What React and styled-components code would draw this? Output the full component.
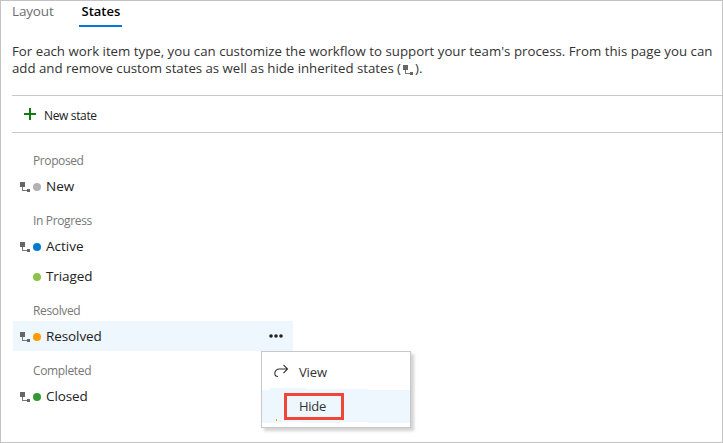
import React from "react";
import styled, { createGlobalStyle } from "styled-components";

const Global = createGlobalStyle`
  * { box-sizing: border-box; }
  body { margin: 0; background: #fff; font-family: "Open Sans", "Noto Sans", sans-serif; }
`;

const Page = styled.main`
  position: relative;
  width: 723px;
  height: 443px;
  padding-left: 11px;
  overflow: hidden;
  border: 1px solid #c3c3c3;
  background: #fff;
  color: #222;
`;

const Label = styled.span`
  white-space: pre;
  font-size: ${(p) => p.$size || 13}px;
  letter-spacing: ${(p) => p.$ls || 0}px;
`;

const Tabs = styled.nav`
  display: flex;
  height: 27px;
  gap: 25px;
`;

const Tab = styled.div`
  height: 26px;
  width: ${(p) => p.$width}px;
  padding-left: ${(p) => (p.$active ? 2.5 : 0)}px;
  line-height: 19px;
  color: ${(p) => (p.$active ? "#000" : "#6e6e6e")};
  font-weight: ${(p) => (p.$active ? 600 : 400)};
  border-bottom: ${(p) => (p.$active ? "2px solid #0078d7" : "0")};
`;

const Description = styled.div`
  height: 67px;
  padding-top: 15px;
  color: #333;
`;

const Line = styled.div`
  display: flex;
  align-items: center;
  height: 17px;
  line-height: 17px;
`;

const Toolbar = styled.div`
  display: flex;
  align-items: center;
  height: 38px;
  padding-left: 12px;
  gap: 8px;
  border-top: 1px solid #c8c8c8;
  border-bottom: 1px solid #c8c8c8;
  line-height: 20px;
`;

const ToolbarText = styled.span`
  padding-top: 1px;
  line-height: 20px;
`;

const List = styled.section`
  width: 281px;
  padding: 8px 0 0 1px;
`;

const Heading = styled.div`
  height: 30px;
  padding-left: 20px;
  line-height: 37px;
  color: #777;
`;

const StateRow = styled.div`
  display: flex;
  align-items: center;
  height: 30px;
  padding: 0 10px 0 7px;
  line-height: 30px;
  background: ${(p) => (p.$selected ? "#eef6fe" : "transparent")};
`;

const IconSlot = styled.span`
  display: flex;
  width: 13px;
  padding-top: 1px;
`;

const Dot = styled.span`
  width: 8px;
  height: 8px;
  margin: 1px 5px 0 0;
  border-radius: 50%;
  background: ${(p) => p.$color};
`;

const More = styled.span`
  display: flex;
  margin-left: auto;
`;

const InlineIcon = styled.span`
  display: flex;
  padding: 3px 2px 0 2px;
`;

const Menu = styled.div`
  position: absolute;
  left: 260px;
  top: 350px;
  width: 150px;
  height: 77px;
  border: 1px solid #c8c8c8;
  background: #fff;
  box-shadow: 3px 3px 3px rgba(0, 0, 0, 0.18);
  color: #333;
`;

const MenuItem = styled.div`
  display: flex;
  align-items: center;
  height: ${(p) => (p.$hot ? 33 : 38)}px;
  padding-left: ${(p) => (p.$hot ? 22 : 12)}px;
  background: ${(p) => (p.$hot ? "#eef6fe" : "#fff")};
`;

const MenuIcon = styled.span`
  display: flex;
  width: 25px;
`;

const MenuText = styled.span`
  line-height: 20px;
  padding-top: 1px;
`;

const HideBox = styled.div`
  width: 60px;
  height: 27px;
  padding-left: 12px;
  border: 3px solid #ef4637;
  line-height: 19px;
`;

const Remnants = styled.svg`
  position: absolute;
  left: 0;
  top: 36px;
`;

function InheritedIcon() {
  return (
    <svg width="10" height="10" viewBox="0 0 10 10" shapeRendering="crispEdges">
      <path d="M0 0h5v5H0zM7 7h3v3H7z" fill="#666" />
      <path d="M2.5 5v3.5H7" fill="none" stroke="#777" />
    </svg>
  );
}

function State({ name, color, inherited, selected, ls }) {
  return (
    <StateRow $selected={selected}>
      <IconSlot>{inherited && <InheritedIcon />}</IconSlot>
      <Dot $color={color} />
      <Label $size={13.5} $ls={ls}>{name}</Label>
      {selected && (
        <More>
          <svg width="14" height="4" viewBox="0 0 14 4" fill="#222">
            <circle cx="2" cy="2" r="1.8" /><circle cx="7" cy="2" r="1.8" /><circle cx="12" cy="2" r="1.8" />
          </svg>
        </More>
      )}
    </StateRow>
  );
}

export default function App() {
  return (
    <>
      <Global />
      <Page>
        <Tabs>
          <Tab $width={42}><Label $size={13.5} $ls={-0.15}>Layout</Label></Tab>
          <Tab $width={43} $active><Label $size={13}>States</Label></Tab>
        </Tabs>
        <Description>
          <Line><Label $size={13.28}>For each work item type, you can customize the workflow to support your team's process. From this page you can</Label></Line>
          <Line>
            <Label $size={13.28} $ls={-0.03}>add and remove custom states as well as hide inherited states (</Label>
            <InlineIcon><InheritedIcon /></InlineIcon>
            <Label $size={13.28}>).</Label>
          </Line>
        </Description>
        <Toolbar>
          <svg width="12" height="12" viewBox="0 0 12 12"><path d="M6 0v12M0 6h12" stroke="#107c10" strokeWidth="2" /></svg>
          <ToolbarText><Label $size={12} $ls={-0.35}>New state</Label></ToolbarText>
        </Toolbar>
        <List>
          <Heading><Label $size={12} $ls={-0.4}>Proposed</Label></Heading>
          <State name="New" color="#b2b2b2" inherited />
          <Heading><Label $size={12} $ls={-0.35}>In Progress</Label></Heading>
          <State name="Active" color="#007acc" inherited />
          <State name="Triaged" color="#8bc34a" ls={-0.1} />
          <Heading><Label $size={12} $ls={-0.36}>Resolved</Label></Heading>
          <State name="Resolved" color="#ff9d00" inherited selected ls={-0.1} />
          <Heading><Label $size={12} $ls={-0.36}>Completed</Label></Heading>
          <State name="Closed" color="#339933" inherited ls={-0.1} />
        </List>
        <Menu>
          <MenuItem>
            <MenuIcon>
              <svg width="15" height="14" viewBox="0 0 15 14" fill="none" stroke="#333" strokeWidth="1.1">
                <path d="M9.5.8 13.5 5 9.5 9.2M13.5 5H5.5C2.5 5 .8 7 .8 9.2c0 1.8 1.2 3.3 3.2 3.3" />
              </svg>
            </MenuIcon>
            <MenuText><Label $ls={-0.15}>View</Label></MenuText>
          </MenuItem>
          <MenuItem $hot><HideBox><Label $ls={-0.3}>Hide</Label></HideBox></MenuItem>
          <Remnants width="148" height="37" shapeRendering="crispEdges">
            <path d="M8 0h36v2H8zM44 1h62v1H44z" fill="#eef6fe" />
            <path d="M15 34h25v1H15zM78 34h28v1H78z" fill="#fff" />
            <path d="M14 31h1v2h-1z" fill="#ff9d00" />
          </Remnants>
        </Menu>
      </Page>
    </>
  );
}
